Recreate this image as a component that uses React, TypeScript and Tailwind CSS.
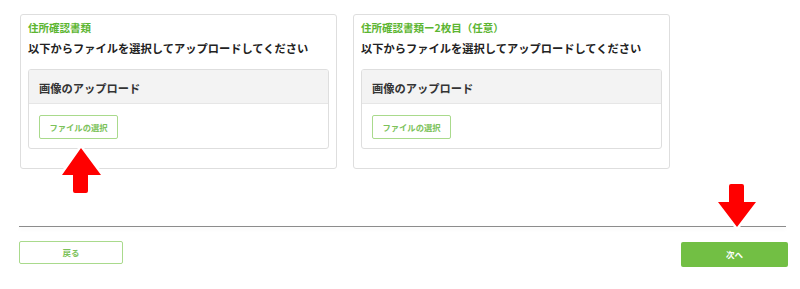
import React from 'react'

const font = { fontFamily: '"Noto Sans CJK JP", "Noto Sans", sans-serif' }

function UploadCard({ title }: { title: string }) {
  return (
    <div className="w-[317px] h-[155px] border border-[#dedede] rounded-[3px] px-[7px] pt-[5px]">
      <div className="text-[10.5px] leading-[16px] font-bold text-[#5cb531]">{title}</div>
      <div className="mt-[4px] text-[11.25px] leading-[16px] font-bold text-[#222]">
        以下からファイルを選択してアップロードしてください
      </div>
      <div className="mt-[13px] h-[80px] border border-[#dedede] rounded-[3px] overflow-hidden">
        <div className="h-[34px] bg-[#f3f3f3] border-b border-[#e6e6e6] px-[10px] pt-[10px] text-[11.25px] leading-[16px] font-bold text-[#333]">
          画像のアップロード
        </div>
        <div className="px-[10px] pt-[8px]">
          <button className="w-[79px] h-[24px] border border-[#a9da8c] rounded-[2px] bg-white text-[8.3px] font-bold text-[#7cc25a]">
            ファイルの選択
          </button>
        </div>
      </div>
    </div>
  )
}

function UpArrow() {
  return (
    <svg className="absolute left-[56px] top-[142px]" width="52" height="58" viewBox="56 142 52 58">
      <path
        d="M81 148 L101 175 L88 175 L88 191 Q88 193 86 193 L75 193 Q73 193 73 191 L73 175 L62 175 Z"
        fill="#ff0000"
        stroke="#ffffff"
        strokeWidth="5"
        strokeLinejoin="round"
        paintOrder="stroke"
      />
    </svg>
  )
}

function DownArrow() {
  return (
    <svg className="absolute left-[712px] top-[178px]" width="52" height="56" viewBox="712 178 52 56">
      <path
        d="M731 184 L742 184 Q744 184 744 186 L744 202 L756 202 L737 227 L718 202 L729 202 L729 186 Q729 184 731 184 Z"
        fill="#ff0000"
        stroke="#ffffff"
        strokeWidth="5"
        strokeLinejoin="round"
        paintOrder="stroke"
      />
    </svg>
  )
}

export default function App() {
  return (
    <div className="relative w-[800px] h-[289px] bg-white overflow-hidden" style={font}>
      <div className="flex gap-[16px] pl-[20px] pt-[14px]">
        <UploadCard title="住所確認書類" />
        <UploadCard title="住所確認書類ー2枚目（任意）" />
      </div>

      <div className="ml-[19px] mr-[14px] mt-[57px] h-px bg-[#8c8c8c] shadow-[0_2px_4px_rgba(0,0,0,0.08)]" />

      <div className="flex justify-between pl-[19px] pr-[12px] mt-[14px]">
        <button className="w-[104px] h-[23px] border border-[#a9da8c] rounded-[2px] bg-white text-[8.5px] font-bold text-[#7cc25a]">
          戻る
        </button>
        <button className="mt-px w-[107px] h-[25px] rounded-[2px] bg-[#72bf44] text-[8.5px] font-bold text-white">
          次へ
        </button>
      </div>

      <UpArrow />
      <DownArrow />
    </div>
  )
}
